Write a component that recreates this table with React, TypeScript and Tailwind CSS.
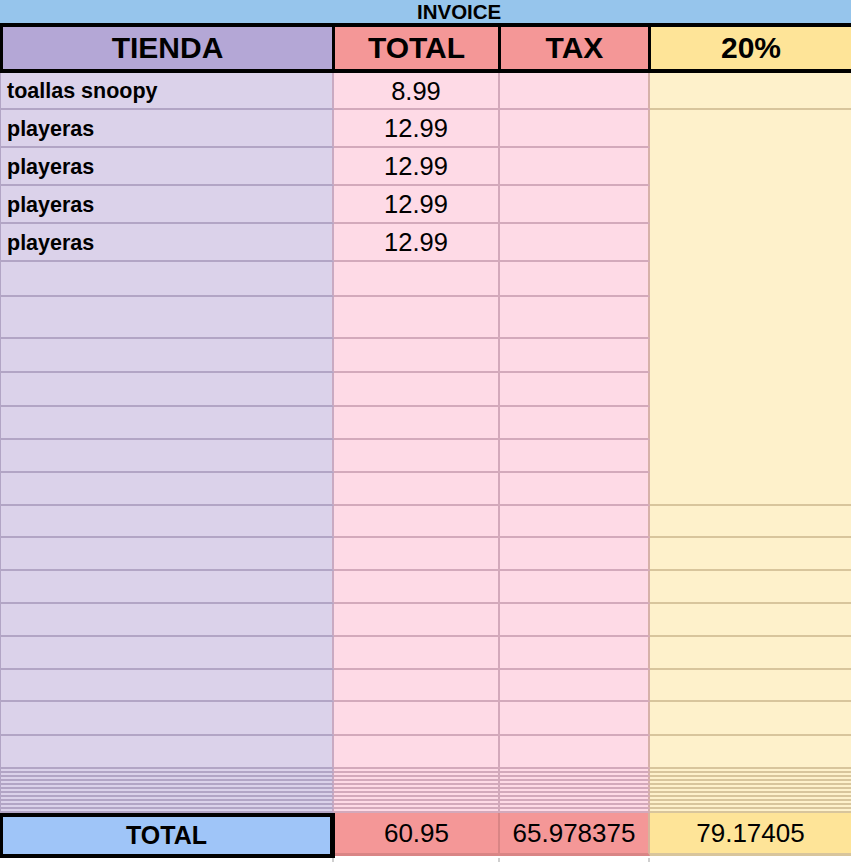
import React from "react";

const rowHeights = [37, 38, 38, 38, 38, 35, 42, 34, 34, 33, 33, 33, 32, 33, 33, 33, 33, 32, 34, 33];

const items: { name: string; total: string }[] = [
  { name: "toallas snoopy", total: "8.99" },
  { name: "playeras", total: "12.99" },
  { name: "playeras", total: "12.99" },
  { name: "playeras", total: "12.99" },
  { name: "playeras", total: "12.99" },
];

export default function App() {
  const cells: React.ReactNode[] = [];
  rowHeights.forEach((_, i) => {
    const item = items[i];
    cells.push(
      <div
        key={`a${i}`}
        className="flex items-center border-l border-r-2 border-b-2 border-l-[#b2a5c5] border-r-[#c9aac2] border-b-[#b2a5c5] bg-[#dbd2ea] pl-[6px] pt-[3px] text-[21.5px] font-bold leading-none text-black"
      >
        {item ? item.name : ""}
      </div>
    );
    cells.push(
      <div
        key={`b${i}`}
        className="flex items-center justify-center border-r-2 border-b-2 border-[#d3a9bb] bg-[#fedae6] pt-[2px] text-[25.5px] leading-none text-black"
      >
        {item ? item.total : ""}
      </div>
    );
    cells.push(
      <div key={`c${i}`} className="border-r-2 border-b-2 border-r-[#d6b1a9] border-b-[#d3a9bb] bg-[#fedae6]" />
    );
    if (i === 0 || i >= 12) {
      cells.push(<div key={`d${i}`} className="border-b-2 border-[#d8c59c] bg-[#fef1cb]" />);
    } else if (i === 1) {
      cells.push(<div key={`d${i}`} className="row-span-11 border-b-2 border-[#d8c59c] bg-[#fef1cb]" />);
    }
  });

  const tiny = Array.from({ length: 11 });

  return (
    <div className="h-[862px] w-[851px] overflow-hidden bg-white font-['Liberation_Sans',Arial,sans-serif] text-black">
      {/* INVOICE bar */}
      <div className="flex h-[23px] items-center bg-[#96c5ec] pl-[417px]">
        <span className="text-[20.5px] font-bold leading-[21px]">INVOICE</span>
      </div>

      {/* Header row */}
      <div className="flex h-[50px] border-y-4 border-black text-[30px] font-bold leading-none">
        <div className="flex w-[335px] items-center justify-center border-x-[3px] border-black bg-[#b4a7d6]">TIENDA</div>
        <div className="flex w-[166px] items-center justify-center border-r-[3px] border-black bg-[#f49797]">TOTAL</div>
        <div className="flex w-[150px] items-center justify-center border-r-[3px] border-black bg-[#f49797]">TAX</div>
        <div className="flex flex-1 items-center justify-center bg-[#fee498]">20%</div>
      </div>

      {/* Body grid */}
      <div className="grid grid-cols-[334px_166px_150px_1fr] grid-rows-[37px_38px_38px_38px_38px_35px_42px_34px_34px_33px_33px_33px_32px_33px_33px_33px_33px_32px_34px_33px]">
        {cells}
      </div>

      {/* Compressed hidden rows */}
      {tiny.map((_, i) => (
        <div key={i} className="flex h-[4px]">
          <div className="w-[334px] border-l border-r-2 border-b-2 border-l-[#b2a5c5] border-r-[#c9aac2] border-b-[#b2a5c5] bg-[#dbd2ea]" />
          <div className="w-[166px] border-r-2 border-b-2 border-[#d3a9bb] bg-[#fedae6]" />
          <div className="w-[150px] border-r-2 border-b-2 border-r-[#d6b1a9] border-b-[#d3a9bb] bg-[#fedae6]" />
          <div className="flex-1 border-b-2 border-[#d8c59c] bg-[#fef1cb]" />
        </div>
      ))}

      {/* Total row */}
      <div className="flex h-[45px] items-start">
        <div className="flex h-[45px] w-[335px] items-center justify-center border-y-4 border-l-[3px] border-r-[5px] border-black bg-[#9fc5f8] text-[25px] font-bold leading-none">
          TOTAL
        </div>
        <div className="flex h-[43px] w-[165px] items-center justify-center border-r-2 border-b-[3px] border-[#d98585] bg-[#f49797] text-[26px] leading-none">
          60.95
        </div>
        <div className="flex h-[43px] w-[150px] items-center justify-center border-r-2 border-b-[3px] border-r-[#d7b39a] border-b-[#d98585] bg-[#f49797] text-[26px] leading-none">
          65.978375
        </div>
        <div className="flex h-[43px] flex-1 items-center justify-center border-b-[3px] border-[#d8c59c] bg-[#fee498] text-[26px] leading-none">
          79.17405
        </div>
      </div>

      {/* white rows below */}
      <div className="flex h-[10px]">
        <div className="w-[334px] border-r-2 border-[#d0d0d0]" />
        <div className="w-[166px] border-r-2 border-[#d0d0d0]" />
        <div className="w-[150px] border-r-2 border-[#d0d0d0]" />
        <div className="flex-1" />
      </div>
    </div>
  );
}
